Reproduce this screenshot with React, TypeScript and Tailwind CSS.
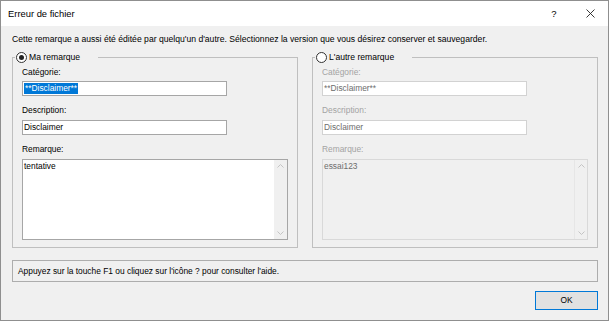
import React from "react";

const Chevron = ({ down }: { down?: boolean }) => (
  <svg width="7" height="4" viewBox="0 0 7 4" className="block">
    <polyline
      points={down ? "0.5,0.5 3.5,3.5 6.5,0.5" : "0.5,3.5 3.5,0.5 6.5,3.5"}
      fill="none"
      stroke="#c4c4c4"
      strokeWidth="1"
    />
  </svg>
);

const Radio = ({ checked }: { checked?: boolean }) => (
  <div className="w-[11px] h-[11px] rounded-full border border-[#333333] bg-white flex items-center justify-center shrink-0">
    {checked && <div className="w-[5px] h-[5px] rounded-full bg-[#222222]" />}
  </div>
);

const ScrollCol = ({ disabled }: { disabled?: boolean }) => (
  <div
    className={
      "w-[13px] h-full flex flex-col items-center justify-between pt-[4px] pb-[4px] " +
      (disabled ? "bg-[#f0f0f0] border-l border-[#e6e6e6]" : "bg-[#f0f0f0]")
    }
  >
    <Chevron />
    <Chevron down />
  </div>
);

function Group({
  title,
  checked,
  disabled,
  legendWidth,
  cat,
  desc,
  rem,
}: {
  title: string;
  checked?: boolean;
  disabled?: boolean;
  legendWidth: string;
  cat: React.ReactNode;
  desc: string;
  rem: string;
}) {
  const labelCls = disabled ? "text-[#a3a3a3]" : "text-black";
  const inputCls = disabled
    ? "border-[#d2d2d2] bg-white text-[#6d6d6d]"
    : "border-[#a6a6a6] bg-white text-black";
  const areaCls = disabled
    ? "border-[#d9d9d9] bg-[#f0f0f0] text-[#6d6d6d]"
    : "border-[#a6a6a6] bg-white text-black";
  return (
    <div className="relative w-[286px] h-[191px] border border-[#bfbfbf] pt-[9px] px-[9px]">
      <div
        className={
          "absolute top-[-7px] left-[2px] h-[12px] bg-[#f0f0f0] pl-[1px] flex items-center gap-[2px] " +
          legendWidth
        }
      >
        <Radio checked={checked} />
        <span className="leading-[11px] text-[8.6px] text-black whitespace-nowrap">{title}</span>
      </div>
      <div className={"h-[11px] leading-[11px] " + labelCls}>Catégorie:</div>
      <div className={"mt-[3px] h-[15px] w-[205px] border pl-[1px] flex items-center " + inputCls}>
        {cat}
      </div>
      <div className={"mt-[9px] h-[11px] leading-[11px] " + labelCls}>Description:</div>
      <div className={"mt-[4px] h-[15px] w-[205px] border pl-[1px] flex items-center leading-[11px] " + inputCls}>
        {desc}
      </div>
      <div className={"mt-[9px] h-[11px] leading-[11px] " + labelCls}>Remarque:</div>
      <div className={"mt-[4px] h-[81px] w-[266px] border flex " + areaCls}>
        <div className="flex-1 pl-[1px] pt-[1px] leading-[11px]">{rem}</div>
        <ScrollCol disabled={disabled} />
      </div>
    </div>
  );
}

export default function App() {
  return (
    <div className="w-[610px] h-[323px] bg-white font-['Liberation_Sans',Arial,sans-serif] text-[8.4px] text-black">
      <div className="w-[609px] h-[321px] border border-[#8f8f8f] bg-[#f0f0f0] flex flex-col">
        <div className="h-[25px] bg-white flex items-center shrink-0">
          <div className="pl-[7px] text-[9.4px] leading-[11px] flex-1">Erreur de fichier</div>
          <div className="w-[36px] h-full flex items-center justify-center text-[9.5px] leading-[11px]">?</div>
          <div className="w-[36px] h-full flex items-center justify-center">
            <svg width="9" height="9" viewBox="0 0 9 9" className="block">
              <line x1="0.5" y1="0.5" x2="8.5" y2="8.5" stroke="#222" strokeWidth="0.9" />
              <line x1="8.5" y1="0.5" x2="0.5" y2="8.5" stroke="#222" strokeWidth="0.9" />
            </svg>
          </div>
        </div>
        <div className="flex-1 flex flex-col pl-[11px] pr-[10px]">
          <div className="mt-[8px] h-[11px] leading-[11px] text-[8.62px] whitespace-nowrap">
            Cette remarque a aussi été éditée par quelqu'un d'autre. Sélectionnez la version que vous désirez conserver et sauvegarder.
          </div>
          <div className="mt-[12px] flex gap-[14px]">
            <Group
              title="Ma remarque"
              checked
              legendWidth="w-[83px]"
              cat={
                <span className="bg-[#0078d7] text-white leading-[11px] h-[11px] px-[1px]">
                  **Disclaimer**
                </span>
              }
              desc="Disclaimer"
              rem="tentative"
            />
            <Group
              title="L'autre remarque"
              disabled
              legendWidth="w-[97px]"
              cat={<span className="leading-[11px]">**Disclaimer**</span>}
              desc="Disclaimer"
              rem="essai123"
            />
          </div>
          <div className="mt-[12px] h-[22px] w-full border border-[#adadad] flex items-center pl-[5px] leading-[11px] whitespace-nowrap">
            Appuyez sur la touche F1 ou cliquez sur l'icône ? pour consulter l'aide.
          </div>
          <div className="mt-[9px] flex justify-end">
            <div className="w-[63px] h-[19px] border border-[#0078d7] bg-[#e1e1e1] flex items-center justify-center leading-[11px]">
              OK
            </div>
          </div>
        </div>
      </div>
    </div>
  );
}
